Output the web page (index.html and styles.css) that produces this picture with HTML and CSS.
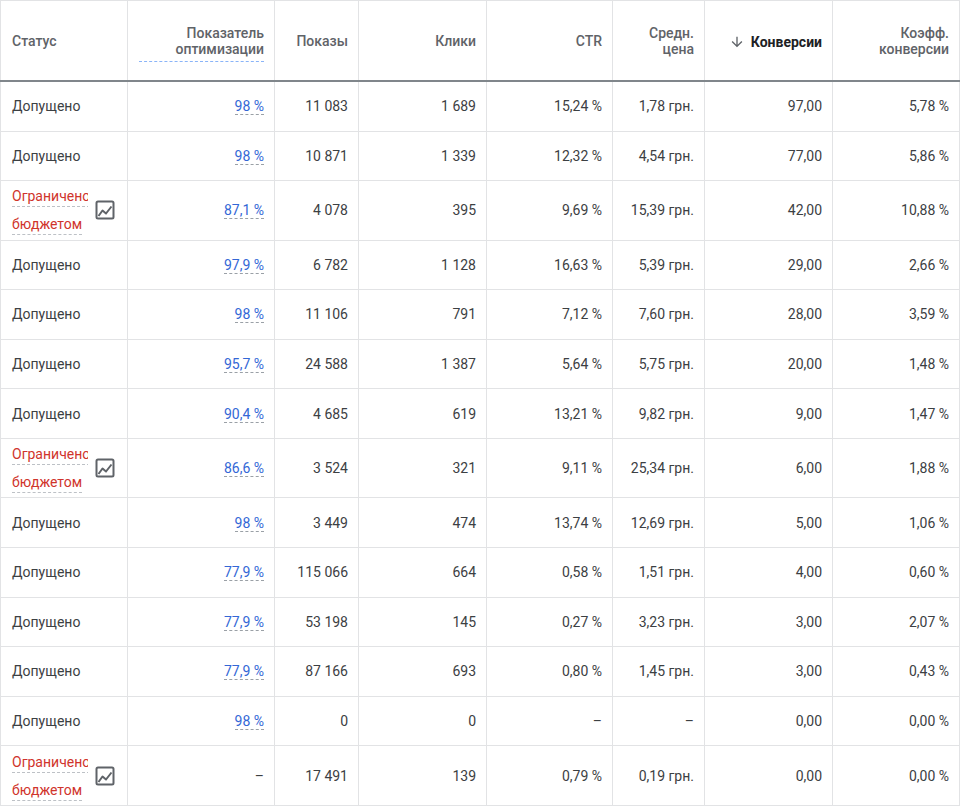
FILE: index.html
```html
<!DOCTYPE html>
<html lang="ru">
<head>
<meta charset="utf-8">
<title>Кампании</title>
<link rel="stylesheet" href="styles.css">
</head>
<body>
<table class="grid">
  <colgroup>
    <col class="c-status"><col class="c-opt"><col class="c-impr"><col class="c-clicks"><col class="c-ctr"><col class="c-cpc"><col class="c-conv"><col class="c-rate">
  </colgroup>
  <thead>
    <tr>
      <th class="left">Статус</th>
      <th><span class="hint">Показатель<br>оптимизации</span></th>
      <th>Показы</th>
      <th>Клики</th>
      <th>CTR</th>
      <th>Средн.<br>цена</th>
      <th class="sorted"><span class="sort"><svg class="arrow" viewBox="0 0 24 24" width="16" height="16"><path d="M20 12l-1.41-1.41L13 16.17V4h-2v12.17l-5.58-5.59L4 12l8 8 8-8z"/></svg>Конверсии</span></th>
      <th>Коэфф.<br>конверсии</th>
    </tr>
  </thead>
  <tbody>
    <tr><td class="left">Допущено</td><td><span class="opt">98 %</span></td><td>11 083</td><td>1 689</td><td>15,24 %</td><td>1,78 грн.</td><td>97,00</td><td>5,78 %</td></tr>
    <tr><td class="left">Допущено</td><td><span class="opt">98 %</span></td><td>10 871</td><td>1 339</td><td>12,32 %</td><td>4,54 грн.</td><td>77,00</td><td>5,86 %</td></tr>
    <tr class="tall"><td class="left"><div class="limited"><div class="ltext"><span>Ограничено бюджетом</span></div><svg class="chart" viewBox="0 0 20 20" width="20" height="20"><rect x="1.5" y="1.5" width="17" height="17" rx="1.5"/><polyline points="3.5,16 7.5,10.5 11,13.5 16.5,6.5"/></svg></div></td><td><span class="opt">87,1 %</span></td><td>4 078</td><td>395</td><td>9,69 %</td><td>15,39 грн.</td><td>42,00</td><td>10,88 %</td></tr>
    <tr><td class="left">Допущено</td><td><span class="opt">97,9 %</span></td><td>6 782</td><td>1 128</td><td>16,63 %</td><td>5,39 грн.</td><td>29,00</td><td>2,66 %</td></tr>
    <tr><td class="left">Допущено</td><td><span class="opt">98 %</span></td><td>11 106</td><td>791</td><td>7,12 %</td><td>7,60 грн.</td><td>28,00</td><td>3,59 %</td></tr>
    <tr><td class="left">Допущено</td><td><span class="opt">95,7 %</span></td><td>24 588</td><td>1 387</td><td>5,64 %</td><td>5,75 грн.</td><td>20,00</td><td>1,48 %</td></tr>
    <tr><td class="left">Допущено</td><td><span class="opt">90,4 %</span></td><td>4 685</td><td>619</td><td>13,21 %</td><td>9,82 грн.</td><td>9,00</td><td>1,47 %</td></tr>
    <tr class="tall"><td class="left"><div class="limited"><div class="ltext"><span>Ограничено бюджетом</span></div><svg class="chart" viewBox="0 0 20 20" width="20" height="20"><rect x="1.5" y="1.5" width="17" height="17" rx="1.5"/><polyline points="3.5,16 7.5,10.5 11,13.5 16.5,6.5"/></svg></div></td><td><span class="opt">86,6 %</span></td><td>3 524</td><td>321</td><td>9,11 %</td><td>25,34 грн.</td><td>6,00</td><td>1,88 %</td></tr>
    <tr><td class="left">Допущено</td><td><span class="opt">98 %</span></td><td>3 449</td><td>474</td><td>13,74 %</td><td>12,69 грн.</td><td>5,00</td><td>1,06 %</td></tr>
    <tr><td class="left">Допущено</td><td><span class="opt">77,9 %</span></td><td>115 066</td><td>664</td><td>0,58 %</td><td>1,51 грн.</td><td>4,00</td><td>0,60 %</td></tr>
    <tr><td class="left">Допущено</td><td><span class="opt">77,9 %</span></td><td>53 198</td><td>145</td><td>0,27 %</td><td>3,23 грн.</td><td>3,00</td><td>2,07 %</td></tr>
    <tr><td class="left">Допущено</td><td><span class="opt">77,9 %</span></td><td>87 166</td><td>693</td><td>0,80 %</td><td>1,45 грн.</td><td>3,00</td><td>0,43 %</td></tr>
    <tr><td class="left">Допущено</td><td><span class="opt">98 %</span></td><td>0</td><td>0</td><td>–</td><td>–</td><td>0,00</td><td>0,00 %</td></tr>
    <tr class="tall"><td class="left"><div class="limited"><div class="ltext"><span>Ограничено бюджетом</span></div><svg class="chart" viewBox="0 0 20 20" width="20" height="20"><rect x="1.5" y="1.5" width="17" height="17" rx="1.5"/><polyline points="3.5,16 7.5,10.5 11,13.5 16.5,6.5"/></svg></div></td><td>–</td><td>17 491</td><td>139</td><td>0,79 %</td><td>0,19 грн.</td><td>0,00</td><td>0,00 %</td></tr>
  </tbody>
</table>
</body>
</html>
```

FILE: styles.css
```css
html, body {
  margin: 0;
  padding: 0;
  background: #ffffff;
}

body {
  font-family: Roboto, "Noto Sans", "Liberation Sans", sans-serif;
  font-size: 14px;
  color: #3c4043;
}

.grid {
  border-collapse: collapse;
  table-layout: fixed;
  width: 959px;
}

.c-status { width: 127px; }
.c-opt { width: 147px; }
.c-impr { width: 84px; }
.c-clicks { width: 128px; }
.c-ctr { width: 126px; }
.c-cpc { width: 92px; }
.c-conv { width: 128px; }
.c-rate { width: 127px; }

.grid th,
.grid td {
  border: 1px solid #e2e3e5;
  padding: 0 10px 0 11px;
  text-align: right;
  vertical-align: middle;
  font-size: 14px;
  white-space: nowrap;
}

.grid th {
  height: 79px;
  color: #5f6368;
  font-weight: 500;
  line-height: 16px;
  border-bottom: 2px solid #80868b;
}

.grid td {
  height: 48.6px;
  color: #3c4043;
  line-height: 20px;
}

.grid tr.tall td {
  height: 58.4px;
}

.grid .left {
  text-align: left;
}

.hint {
  display: block;
  margin-top: 6px;
  padding-bottom: 4px;
  border-bottom: 1px dashed #8ab4f8;
}

.sorted {
  color: #202124;
}

.sort {
  display: flex;
  justify-content: flex-end;
  align-items: center;
  padding-top: 2px;
  font-weight: 700;
  color: #202124;
}

.arrow {
  fill: #5f6368;
  margin-right: 6px;
}

.opt {
  color: #3367d6;
  border-bottom: 1px dashed #9aa0a6;
}

.limited {
  display: flex;
  align-items: center;
}

.ltext {
  width: 76px;
  overflow: hidden;
  white-space: normal;
  line-height: 28px;
  color: #d0342c;
}

.ltext span {
  padding-bottom: 2px;
  border-bottom: 1px dashed #bdc1c6;
}

.chart {
  flex: none;
  margin-left: 7px;
  fill: none;
  stroke: #5f6368;
  stroke-width: 2;
  stroke-linejoin: round;
}
```
